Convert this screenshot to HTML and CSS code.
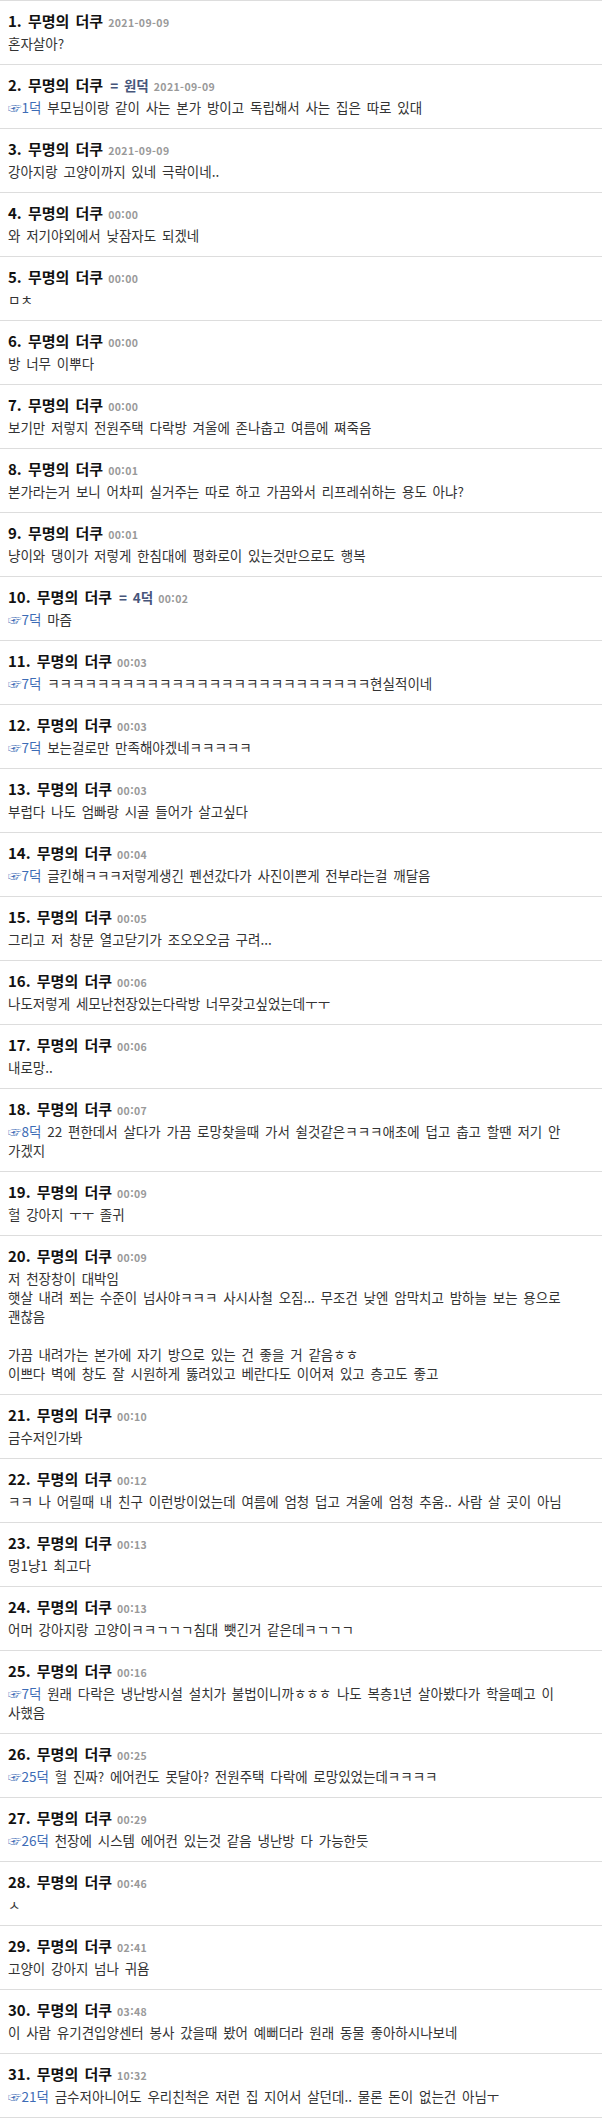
FILE: index.html
```html
<!DOCTYPE html>
<html lang="ko">
<head>
<meta charset="utf-8">
<title>댓글</title>
<link rel="stylesheet" href="styles.css">
</head>
<body>
<ul class="comments">
  <li class="comment"><div class="head"><span class="name">1. 무명의 더쿠</span><span class="date">2021-09-09</span></div><div class="body">혼자살아?</div></li>
  <li class="comment"><div class="head"><span class="name">2. 무명의 더쿠</span><span class="op">= 원덕</span><span class="date">2021-09-09</span></div><div class="body"><a class="ref">☞1덕</a> 부모님이랑 같이 사는 본가 방이고 독립해서 사는 집은 따로 있대</div></li>
  <li class="comment"><div class="head"><span class="name">3. 무명의 더쿠</span><span class="date">2021-09-09</span></div><div class="body">강아지랑 고양이까지 있네 극락이네..</div></li>
  <li class="comment"><div class="head"><span class="name">4. 무명의 더쿠</span><span class="date">00:00</span></div><div class="body">와 저기야외에서 낮잠자도 되겠네</div></li>
  <li class="comment"><div class="head"><span class="name">5. 무명의 더쿠</span><span class="date">00:00</span></div><div class="body">ㅁㅊ</div></li>
  <li class="comment"><div class="head"><span class="name">6. 무명의 더쿠</span><span class="date">00:00</span></div><div class="body">방 너무 이뿌다</div></li>
  <li class="comment"><div class="head"><span class="name">7. 무명의 더쿠</span><span class="date">00:00</span></div><div class="body">보기만 저렇지 전원주택 다락방 겨울에 존나춥고 여름에 쪄죽음</div></li>
  <li class="comment"><div class="head"><span class="name">8. 무명의 더쿠</span><span class="date">00:01</span></div><div class="body">본가라는거 보니 어차피 실거주는 따로 하고 가끔와서 리프레쉬하는 용도 아냐?</div></li>
  <li class="comment"><div class="head"><span class="name">9. 무명의 더쿠</span><span class="date">00:01</span></div><div class="body">냥이와 댕이가 저렇게 한침대에 평화로이 있는것만으로도 행복</div></li>
  <li class="comment"><div class="head"><span class="name">10. 무명의 더쿠</span><span class="op">= 4덕</span><span class="date">00:02</span></div><div class="body"><a class="ref">☞7덕</a> 마즘</div></li>
  <li class="comment"><div class="head"><span class="name">11. 무명의 더쿠</span><span class="date">00:03</span></div><div class="body"><a class="ref">☞7덕</a> ㅋㅋㅋㅋㅋㅋㅋㅋㅋㅋㅋㅋㅋㅋㅋㅋㅋㅋㅋㅋㅋㅋㅋㅋㅋㅋ현실적이네</div></li>
  <li class="comment"><div class="head"><span class="name">12. 무명의 더쿠</span><span class="date">00:03</span></div><div class="body"><a class="ref">☞7덕</a> 보는걸로만 만족해야겠네ㅋㅋㅋㅋㅋ</div></li>
  <li class="comment"><div class="head"><span class="name">13. 무명의 더쿠</span><span class="date">00:03</span></div><div class="body">부럽다 나도 엄빠랑 시골 들어가 살고싶다</div></li>
  <li class="comment"><div class="head"><span class="name">14. 무명의 더쿠</span><span class="date">00:04</span></div><div class="body"><a class="ref">☞7덕</a> 글킨해ㅋㅋㅋ저렇게생긴 펜션갔다가 사진이쁜게 전부라는걸 깨달음</div></li>
  <li class="comment"><div class="head"><span class="name">15. 무명의 더쿠</span><span class="date">00:05</span></div><div class="body">그리고 저 창문 열고닫기가 조오오오금 구려...</div></li>
  <li class="comment"><div class="head"><span class="name">16. 무명의 더쿠</span><span class="date">00:06</span></div><div class="body">나도저렇게 세모난천장있는다락방 너무갖고싶었는데ㅜㅜ</div></li>
  <li class="comment"><div class="head"><span class="name">17. 무명의 더쿠</span><span class="date">00:06</span></div><div class="body">내로망..</div></li>
  <li class="comment"><div class="head"><span class="name">18. 무명의 더쿠</span><span class="date">00:07</span></div><div class="body"><a class="ref">☞8덕</a> 22 편한데서 살다가 가끔 로망찾을때 가서 쉴것같은ㅋㅋㅋ애초에 덥고 춥고 할땐 저기 안<br>가겠지</div></li>
  <li class="comment"><div class="head"><span class="name">19. 무명의 더쿠</span><span class="date">00:09</span></div><div class="body">헐 강아지 ㅜㅜ 졸귀</div></li>
  <li class="comment"><div class="head"><span class="name">20. 무명의 더쿠</span><span class="date">00:09</span></div><div class="body">저 천장창이 대박임<br>햇살 내려 쬐는 수준이 넘사야ㅋㅋㅋ 사시사철 오짐... 무조건 낮엔 암막치고 밤하늘 보는 용으로<br>괜찮음<br><br>가끔 내려가는 본가에 자기 방으로 있는 건 좋을 거 같음ㅎㅎ<br>이쁘다 벽에 창도 잘 시원하게 뚫려있고 베란다도 이어져 있고 층고도 좋고</div></li>
  <li class="comment"><div class="head"><span class="name">21. 무명의 더쿠</span><span class="date">00:10</span></div><div class="body">금수저인가봐</div></li>
  <li class="comment"><div class="head"><span class="name">22. 무명의 더쿠</span><span class="date">00:12</span></div><div class="body">ㅋㅋ 나 어릴때 내 친구 이런방이었는데 여름에 엄청 덥고 겨울에 엄청 추움.. 사람 살 곳이 아님</div></li>
  <li class="comment"><div class="head"><span class="name">23. 무명의 더쿠</span><span class="date">00:13</span></div><div class="body">멍1냥1 최고다</div></li>
  <li class="comment"><div class="head"><span class="name">24. 무명의 더쿠</span><span class="date">00:13</span></div><div class="body">어머 강아지랑 고양이ㅋㅋㄱㄱㄱ침대 뺏긴거 같은데ㅋㄱㄱㄱ</div></li>
  <li class="comment"><div class="head"><span class="name">25. 무명의 더쿠</span><span class="date">00:16</span></div><div class="body"><a class="ref">☞7덕</a> 원래 다락은 냉난방시설 설치가 불법이니까ㅎㅎㅎ 나도 복층1년 살아봤다가 학을떼고 이<br>사했음</div></li>
  <li class="comment"><div class="head"><span class="name">26. 무명의 더쿠</span><span class="date">00:25</span></div><div class="body"><a class="ref">☞25덕</a> 헐 진짜? 에어컨도 못달아? 전원주택 다락에 로망있었는데ㅋㅋㅋㅋ</div></li>
  <li class="comment"><div class="head"><span class="name">27. 무명의 더쿠</span><span class="date">00:29</span></div><div class="body"><a class="ref">☞26덕</a> 천장에 시스템 에어컨 있는것 같음 냉난방 다 가능한듯</div></li>
  <li class="comment"><div class="head"><span class="name">28. 무명의 더쿠</span><span class="date">00:46</span></div><div class="body">ㅅ</div></li>
  <li class="comment"><div class="head"><span class="name">29. 무명의 더쿠</span><span class="date">02:41</span></div><div class="body">고양이 강아지 넘나 귀욤</div></li>
  <li class="comment"><div class="head"><span class="name">30. 무명의 더쿠</span><span class="date">03:48</span></div><div class="body">이 사람 유기견입양센터 봉사 갔을때 봤어 예뻐더라 원래 동물 좋아하시나보네</div></li>
  <li class="comment"><div class="head"><span class="name">31. 무명의 더쿠</span><span class="date">10:32</span></div><div class="body"><a class="ref">☞21덕</a> 금수저아니어도 우리친척은 저런 집 지어서 살던데.. 물론 돈이 없는건 아님ㅜ</div></li>
</ul>
</body>
</html>
```
FILE: styles.css
```css
html, body {
  margin: 0;
  padding: 0;
  background: #fff;
}
body {
  font-family: "Noto Sans CJK KR", "Noto Sans", sans-serif;
  color: #333;
  word-spacing: 2px;
}
.comments {
  list-style: none;
  margin: 0;
  padding: 0;
}
.comment {
  border-top: 1px solid #ddd;
  padding: 10px 4px 11px 8px;
}
.comment:last-child {
  border-bottom: 1px solid #ddd;
}
.head {
  display: flex;
  align-items: baseline;
  gap: 5px;
  height: 20px;
  line-height: 20px;
  margin-bottom: 3px;
}
.name {
  font-size: 15px;
  font-weight: 700;
  color: #111;
}
.op {
  font-size: 13.5px;
  font-weight: 700;
  color: #46557a;
  margin-left: 2px;
}
.date {
  font-size: 10.5px;
  font-weight: 700;
  letter-spacing: 0.4px;
  color: #999;
}
.body {
  font-size: 13.5px;
  line-height: 19px;
  color: #333;
}
.ref {
  color: #3d6cb6;
  text-decoration: none;
}
```
